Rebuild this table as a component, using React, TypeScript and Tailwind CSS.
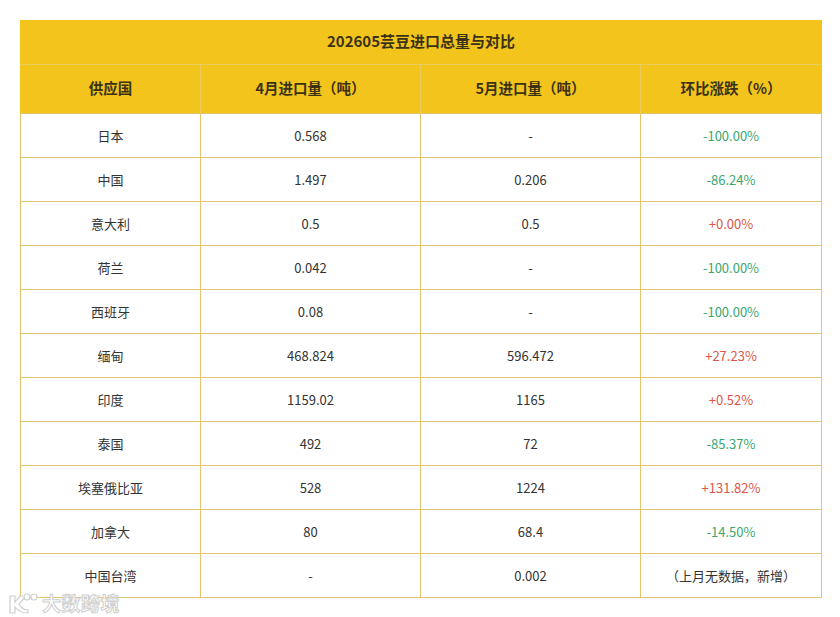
const rows = [
  { country: "日本", apr: "0.568", may: "-", change: "-100.00%", tone: "down" },
  { country: "中国", apr: "1.497", may: "0.206", change: "-86.24%", tone: "down" },
  { country: "意大利", apr: "0.5", may: "0.5", change: "+0.00%", tone: "up" },
  { country: "荷兰", apr: "0.042", may: "-", change: "-100.00%", tone: "down" },
  { country: "西班牙", apr: "0.08", may: "-", change: "-100.00%", tone: "down" },
  { country: "缅甸", apr: "468.824", may: "596.472", change: "+27.23%", tone: "up" },
  { country: "印度", apr: "1159.02", may: "1165", change: "+0.52%", tone: "up" },
  { country: "泰国", apr: "492", may: "72", change: "-85.37%", tone: "down" },
  { country: "埃塞俄比亚", apr: "528", may: "1224", change: "+131.82%", tone: "up" },
  { country: "加拿大", apr: "80", may: "68.4", change: "-14.50%", tone: "down" },
  { country: "中国台湾", apr: "-", may: "0.002", change: "（上月无数据，新增）", tone: "none" },
];

const toneClass: Record<string, string> = {
  up: "text-[#e0554b]",
  down: "text-[#3aa76d]",
  none: "text-[#333333]",
};

export default function App() {
  return (
    <div
      className="relative w-[840px] h-[617px] bg-white pt-5 pl-5"
      style={{ fontFamily: '"Noto Sans CJK SC", "Noto Sans", sans-serif' }}
    >
      <table className="w-[801px] border-collapse text-[13px] text-[#333333] table-fixed">
        <colgroup>
          <col className="w-[180px]" />
          <col className="w-[220px]" />
          <col className="w-[220px]" />
          <col className="w-[181px]" />
        </colgroup>
        <thead>
          <tr className="h-[44px] bg-[#f3c51c]">
            <th colSpan={4} className="border border-[#f3c51c] border-b-[#e9cb5e] pb-[2px] text-[15px] font-bold text-[#3b3216]">
              202605芸豆进口总量与对比
            </th>
          </tr>
          <tr className="h-[49px] bg-[#f3c51c] text-[14.5px] font-bold text-[#3b3216]">
            <th className="border border-[#e9cb5e] border-l-[#f3c51c] border-b-[#e3c46c] pb-[3px]">供应国</th>
            <th className="border border-[#e9cb5e] border-b-[#e3c46c] pb-[3px]">4月进口量（吨）</th>
            <th className="border border-[#e9cb5e] border-b-[#e3c46c] pb-[3px]">5月进口量（吨）</th>
            <th className="border border-[#e9cb5e] border-r-[#f3c51c] border-b-[#e3c46c] pb-[3px]">环比涨跌（%）</th>
          </tr>
        </thead>
        <tbody>
          {rows.map((r) => (
            <tr key={r.country} className="h-[44px]">
              <td className="border border-[#e3c46c] text-center">{r.country}</td>
              <td className="border border-[#e3c46c] text-center">{r.apr}</td>
              <td className="border border-[#e3c46c] text-center">{r.may}</td>
              <td className={`border border-[#e3c46c] text-center ${toneClass[r.tone]}`}>{r.change}</td>
            </tr>
          ))}
        </tbody>
      </table>

      {/* watermark */}
      <div className="absolute left-[8px] top-[589px] flex items-center gap-[2px]">
        <svg width="32" height="22" viewBox="0 0 32 22" fill="#ffffff" stroke="#cfcfcf" strokeWidth="1.2">
          <path d="M2 4 H7 V10 L12 4 H18 L11 12 C13 16 16 18 20 18 V21 C14 21 10 19 7 15 V21 H2 Z" />
          <circle cx="19" cy="5" r="3" />
          <circle cx="26" cy="5" r="3" />
        </svg>
        <span className="text-[19px] font-bold tracking-[0.5px] text-white [-webkit-text-stroke:1px_#cfcfcf]">
          大数跨境
        </span>
      </div>
    </div>
  );
}
